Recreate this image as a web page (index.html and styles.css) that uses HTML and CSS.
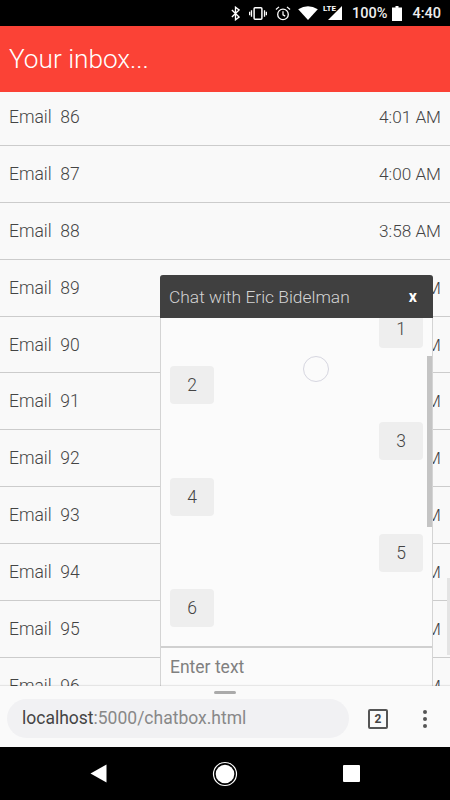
FILE: index.html
```html
<!DOCTYPE html>
<html lang="en">
<head>
    <meta charset="UTF-8">
    <meta name="viewport" content="width=device-width, initial-scale=1.0">
    <title>Your inbox</title>
    <link rel="stylesheet" href="styles.css">
</head>
<body>
    <div class="statusbar">
        <svg class="st-icon" width="9" height="15" viewBox="0 0 10 16"><path d="M1 4l8 8-4 3V1l4 3-8 8" fill="none" stroke="#fff" stroke-width="1.5"/></svg>
        <svg class="st-icon st-vibrate" width="20" height="13" viewBox="0 0 20 14"><rect x="5.8" y="0.8" width="8.4" height="12.4" rx="1" fill="none" stroke="#fff" stroke-width="1.6"/><path d="M3 3.500v7M1 5v4M17 3.500v7M19 5v4" stroke="#fff" stroke-width="1.4"/></svg>
        <svg class="st-icon st-alarm" width="16" height="15" viewBox="0 0 18 17"><circle cx="9" cy="9.500" r="6" fill="none" stroke="#fff" stroke-width="1.5"/><path d="M9 6v4l2.500 1.500M1 4l3.500-3M17 4l-3.500-3" fill="none" stroke="#fff" stroke-width="1.4"/></svg>
        <svg class="st-icon st-wifi" width="20" height="14" viewBox="0 0 21 15"><path d="M0 3.500Q10.500-3 21 3.500L10.500 15z" fill="#fff"/></svg>
        <div class="st-lte">
            <span>LTE</span>
            <svg width="20" height="14" viewBox="0 0 20 14"><path d="M20 0v14H6z" fill="#fff"/></svg>
        </div>
        <span class="st-text st-pct">100%</span>
        <svg class="st-icon st-batt" width="10" height="15" viewBox="0 0 10 15"><path d="M3.500 0h3v1.500H10V15H0V1.500h3.500z" fill="#fff"/></svg>
        <span class="st-text st-time">4:40</span>
    </div>

    <div class="page">
        <div class="inbox-title">Your inbox...</div>
        <div class="inbox">
            <div class="email-list">
                <div class="email"><span>Email&nbsp; 86</span><span class="email-time">4:01 AM</span></div>
                <div class="email"><span>Email&nbsp; 87</span><span class="email-time">4:00 AM</span></div>
                <div class="email"><span>Email&nbsp; 88</span><span class="email-time">3:58 AM</span></div>
                <div class="email"><span>Email&nbsp; 89</span><span class="email-time">3:57 AM</span></div>
                <div class="email"><span>Email&nbsp; 90</span><span class="email-time">3:55 AM</span></div>
                <div class="email"><span>Email&nbsp; 91</span><span class="email-time">3:54 AM</span></div>
                <div class="email"><span>Email&nbsp; 92</span><span class="email-time">3:52 AM</span></div>
                <div class="email"><span>Email&nbsp; 93</span><span class="email-time">3:51 AM</span></div>
                <div class="email"><span>Email&nbsp; 94</span><span class="email-time">3:49 AM</span></div>
                <div class="email"><span>Email&nbsp; 95</span><span class="email-time">3:48 AM</span></div>
                <div class="email"><span>Email&nbsp; 96</span><span class="email-time">3:46 AM</span></div>
            </div>
            <div class="page-scroll"></div>

            <div class="chatbox">
                <div class="chat-head"><span>Chat with Eric Bidelman</span><span class="chat-close">x</span></div>
                <div class="chat-body">
                    <div class="messages">
                        <div class="msg msg-right">1</div>
                        <div class="msg">2</div>
                        <div class="msg msg-right">3</div>
                        <div class="msg">4</div>
                        <div class="msg msg-right">5</div>
                        <div class="msg">6</div>
                    </div>
                    <div class="chat-scroll"></div>
                    <div class="spinner"></div>
                </div>
                <div class="chat-input">Enter text</div>
            </div>
        </div>
    </div>

    <div class="browserbar">
        <div class="handle"></div>
        <div class="browser-row">
            <div class="urlbar"><span class="host">localhost</span>:5000/chatbox.html</div>
            <div class="tabs">2</div>
            <div class="menu"><i></i><i></i><i></i></div>
        </div>
    </div>

    <div class="navbar">
        <svg width="17" height="19" viewBox="0 0 17 19"><path d="M16.500 0.500v18L0.500 9.500z" fill="#fff"/></svg>
        <svg width="26" height="26" viewBox="0 0 26 26"><circle cx="13" cy="13" r="11.500" fill="none" stroke="#fff" stroke-width="1.200"/><circle cx="13" cy="13" r="9.300" fill="#fff"/></svg>
        <svg width="17" height="17" viewBox="0 0 17 17"><rect width="17" height="17" rx="1" fill="#fff"/></svg>
    </div>
</body>
</html>
```

FILE: styles.css
```css
* {
    box-sizing: border-box;
}
html, body {
    margin: 0;
    height: 100%;
    overflow: hidden;
}
body {
    width: 450px;
    height: 800px;
    display: flex;
    flex-direction: column;
    font-family: Roboto, "Liberation Sans", sans-serif;
    background: #f9f9f9;
}

/* status bar */
.statusbar {
    height: 26px;
    background: #000;
    color: #eee;
    display: flex;
    align-items: center;
    padding: 0 9px 0 231px;
}
.st-vibrate {
    margin-left: 8px;
}
.st-alarm {
    margin-left: 7px;
}
.st-wifi {
    margin-left: 7px;
}
.st-lte {
    position: relative;
    margin-left: 4px;
    display: flex;
}
.st-lte span {
    position: absolute;
    left: 1px;
    top: -2px;
    font-size: 8px;
    font-weight: 700;
    color: #fff;
}
.st-text {
    font-size: 14.5px;
    font-weight: 500;
}
.st-pct {
    margin-left: 10px;
}
.st-batt {
    margin-left: 5px;
}
.st-time {
    margin-left: auto;
}

/* inbox */
.page {
    flex: 1;
    min-height: 0;
    display: flex;
    flex-direction: column;
}
.inbox-title {
    height: 66px;
    background: #fb4236;
    color: #fff;
    font-size: 26.2px;
    font-weight: 300;
    line-height: 66px;
    padding-left: 9px;
    flex-shrink: 0;
}
.inbox {
    position: relative;
    flex: 1;
    overflow: hidden;
}
.email-list {
    margin-top: -3px;
}
.email {
    height: 56.9px;
    display: flex;
    align-items: center;
    justify-content: space-between;
    padding: 0 9px;
    border-bottom: 1px solid #ccc;
    color: #444;
    font-size: 17.5px;
    font-weight: 300;
}
.email-time {
    font-size: 17.2px;
}
.page-scroll {
    position: absolute;
    right: 0;
    top: 486px;
    width: 3px;
    height: 77px;
    background: #e4e4e4;
}

/* chat */
.chatbox {
    position: absolute;
    left: 160px;
    top: 183px;
    width: 273px;
    height: 440px;
    display: flex;
    flex-direction: column;
    background: #fbfbfb;
    border-left: 1px solid #d4d4d4;
    border-right: 1px solid #d4d4d4;
    border-radius: 3px 3px 0 0;
}
.chat-head {
    height: 43px;
    margin: 0 -1px;
    background: #404040;
    color: #d4d4d4;
    display: flex;
    align-items: center;
    justify-content: space-between;
    padding: 0 16px 0 9px;
    font-size: 17.4px;
    font-weight: 300;
    border-radius: 3px 3px 0 0;
    flex-shrink: 0;
}
.chat-close {
    color: #fff;
    font-weight: 700;
    font-size: 16px;
}
.chat-body {
    position: relative;
    height: 330px;
    overflow: hidden;
    border-bottom: 2px solid #d0d0d0;
    flex-shrink: 0;
}
.messages {
    margin-top: -8px;
    padding: 0 9px;
    display: flex;
    flex-direction: column;
    align-items: flex-start;
    gap: 17.9px;
}
.msg {
    width: 44px;
    height: 38px;
    border-radius: 4px;
    background: #eee;
    color: #444;
    font-size: 17.5px;
    font-weight: 300;
    display: flex;
    align-items: center;
    justify-content: center;
}
.msg-right {
    align-self: flex-end;
}
.chat-scroll {
    position: absolute;
    right: 0;
    top: 38px;
    width: 5px;
    height: 171px;
    background: #c4c4c4;
}
.spinner {
    position: absolute;
    left: 142px;
    top: 38px;
    width: 26px;
    height: 26px;
    border-radius: 50%;
    border: 1.500px solid #d6d6e0;
}
.chat-input {
    padding: 9px 9px;
    color: #808080;
    font-size: 17.5px;
}

/* browser chrome */
.browserbar {
    position: relative;
    height: 61px;
    flex-shrink: 0;
    background: #fafafa;
    box-shadow: 0 -1px 1px rgba(0, 0, 0, 0.08);
}
.handle {
    width: 22px;
    height: 3px;
    border-radius: 2px;
    background: #aaa;
    margin: 0 auto;
    transform: translateY(5px);
}
.browser-row {
    display: flex;
    align-items: center;
    padding: 10px 0 0 7px;
}
.urlbar {
    width: 342px;
    height: 39px;
    border-radius: 20px;
    background: #f1f1f3;
    color: #888;
    font-size: 17.5px;
    line-height: 39px;
    padding-left: 15px;
}
.host {
    color: #444;
}
.tabs {
    width: 20px;
    height: 20px;
    margin-left: 19px;
    border: 2px solid #555;
    border-radius: 2px;
    color: #444;
    font-size: 12px;
    font-weight: 700;
    line-height: 16px;
    text-align: center;
}
.menu {
    margin-left: 35px;
    display: flex;
    flex-direction: column;
    gap: 3px;
}
.menu i {
    width: 4px;
    height: 4px;
    border-radius: 50%;
    background: #555;
}

/* nav */
.navbar {
    height: 53px;
    flex-shrink: 0;
    background: #000;
    position: relative;
    display: grid;
    grid-template-columns: 17px 26px 17px;
    justify-content: space-between;
    align-items: center;
    padding: 0 90px;
}
```
